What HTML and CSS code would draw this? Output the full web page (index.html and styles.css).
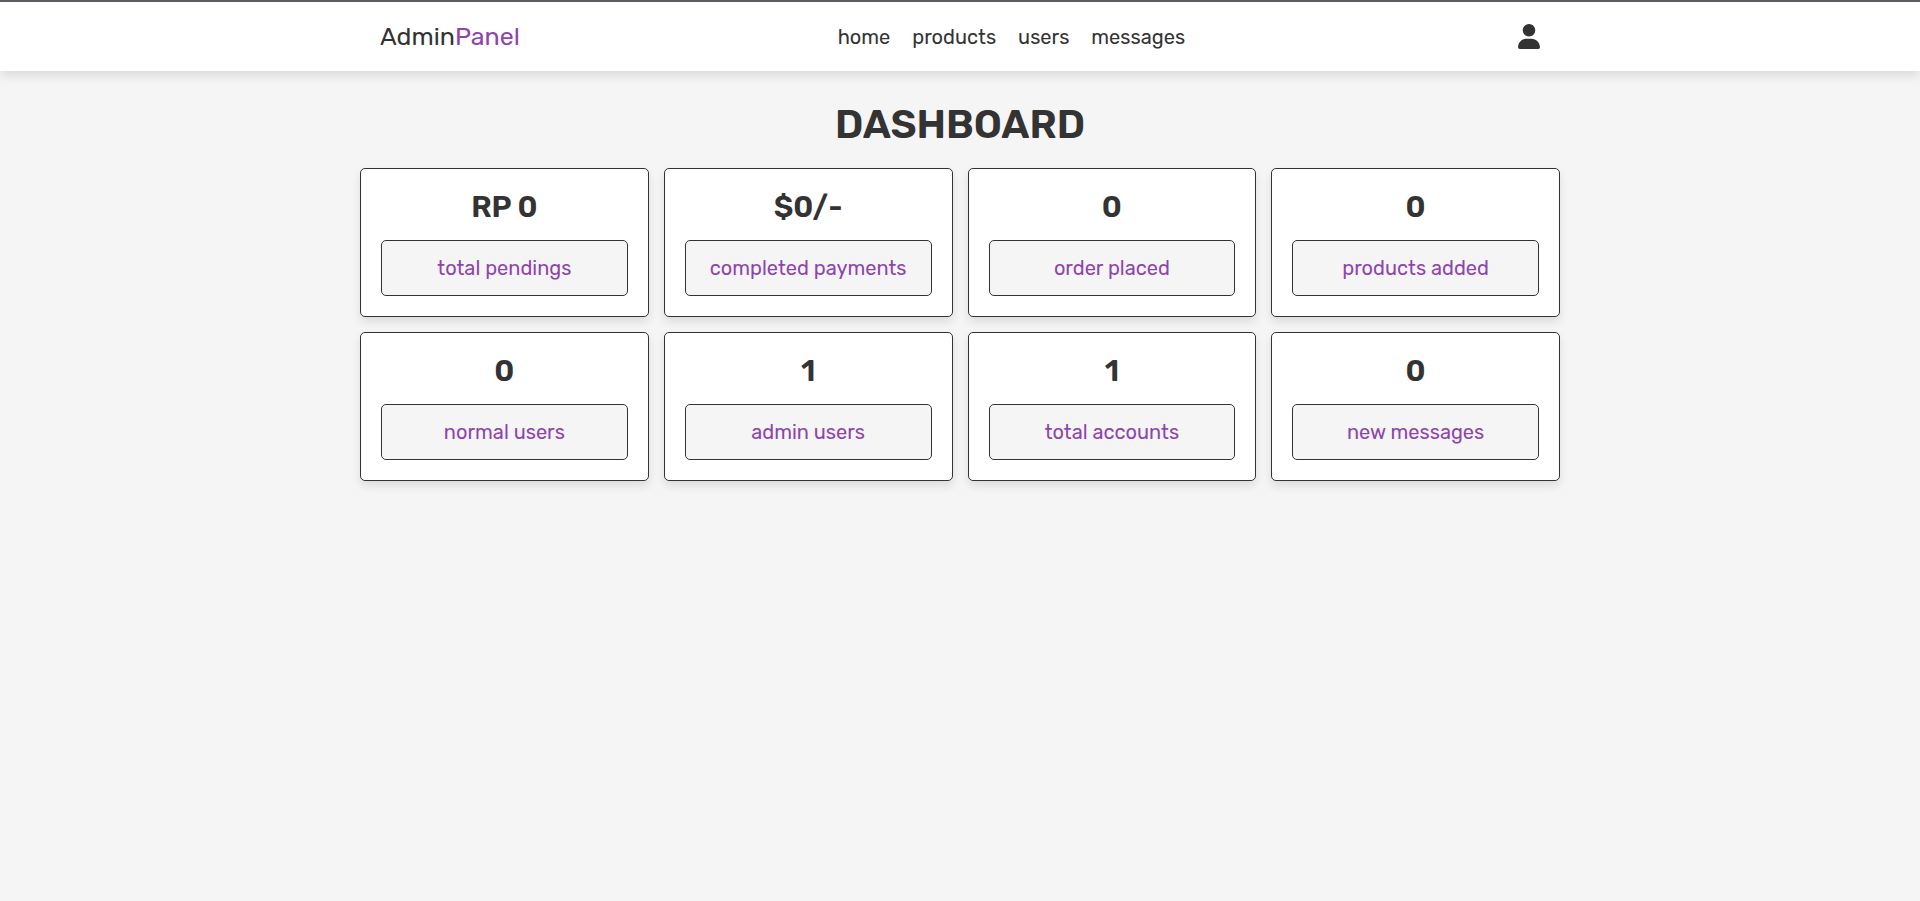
FILE: index.html
```html
<!DOCTYPE html>
<html lang="en">
<head>
<meta charset="UTF-8">
<meta name="viewport" content="width=device-width, initial-scale=1">
<title>Dashboard</title>
<link rel="stylesheet" href="styles.css">
</head>
<body>
<header class="header">
  <div class="flex">
    <a href="#" class="logo">Admin<span>Panel</span></a>
    <nav class="navbar">
      <a href="#">home</a>
      <a href="#">products</a>
      <a href="#">users</a>
      <a href="#">messages</a>
    </nav>
    <button class="user-btn" type="button" aria-label="account">
      <svg viewBox="0 0 448 512" aria-hidden="true"><path d="M224 256c70.700 0 128-57.310 128-128s-57.300-128-128-128C153.300 0 96 57.310 96 128S153.300 256 224 256zM274.700 304H173.300C77.610 304 0 381.600 0 477.300c0 19.140 15.520 34.670 34.660 34.670h378.700C432.500 512 448 496.500 448 477.300C448 381.600 370.400 304 274.700 304z"/></svg>
    </button>
  </div>
</header>
<main class="dashboard">
  <h1 class="title">dashboard</h1>
  <div class="box-container">
    <section class="box"><h3>RP 0</h3><p>total pendings</p></section>
    <section class="box"><h3>$0/-</h3><p>completed payments</p></section>
    <section class="box"><h3>0</h3><p>order placed</p></section>
    <section class="box"><h3>0</h3><p>products added</p></section>
    <section class="box"><h3>0</h3><p>normal users</p></section>
    <section class="box"><h3>1</h3><p>admin users</p></section>
    <section class="box"><h3>1</h3><p>total accounts</p></section>
    <section class="box"><h3>0</h3><p>new messages</p></section>
  </div>
</main>
</body>
</html>
```
FILE: styles.css
```css
* {
  margin: 0;
  padding: 0;
  box-sizing: border-box;
  text-decoration: none;
}
body {
  font-family: Rubik, Roboto, sans-serif;
  background: #f5f5f5;
  color: #333;
}
.header {
  background: #fff;
  border-top: 2px solid #5f5c64;
  box-shadow: 0 5px 10px rgba(0, 0, 0, .1);
}
.flex {
  max-width: 1200px;
  margin: 0 auto;
  padding: 20px;
  display: flex;
  align-items: center;
  justify-content: space-between;
}
.logo {
  font-size: 25px;
  line-height: 29px;
  color: #333;
}
.logo span {
  color: #8e44ad;
}
.navbar {
  display: flex;
  gap: 22px;
}
.navbar a {
  font-size: 20px;
  line-height: 24px;
  color: #333;
}
.user-btn {
  margin-left: 15px;
  border: 0;
  background: none;
  display: flex;
  cursor: pointer;
}
.user-btn svg {
  width: 22px;
  height: 25px;
  fill: #333;
}
.dashboard {
  max-width: 1200px;
  margin: 0 auto;
  padding: 30px 0;
}
.title {
  text-align: center;
  text-transform: uppercase;
  font-size: 40px;
  line-height: 47px;
  font-weight: 600;
  margin-bottom: 20px;
}
.box-container {
  display: grid;
  grid-template-columns: repeat(4, 1fr);
  gap: 15px;
}
.box {
  border: 1px solid #333;
  border-radius: 5px;
  padding: 20px;
  background: #fff;
  box-shadow: 0 5px 10px rgba(0, 0, 0, .1);
  text-align: center;
}
.box h3 {
  font-size: 30px;
  line-height: 36px;
  font-weight: 600;
}
.box p {
  margin-top: 15px;
  padding: 15px;
  border: 1px solid #333;
  border-radius: 5px;
  background: #f5f5f5;
  font-size: 20px;
  line-height: 24px;
  color: #8e44ad;
}
```
